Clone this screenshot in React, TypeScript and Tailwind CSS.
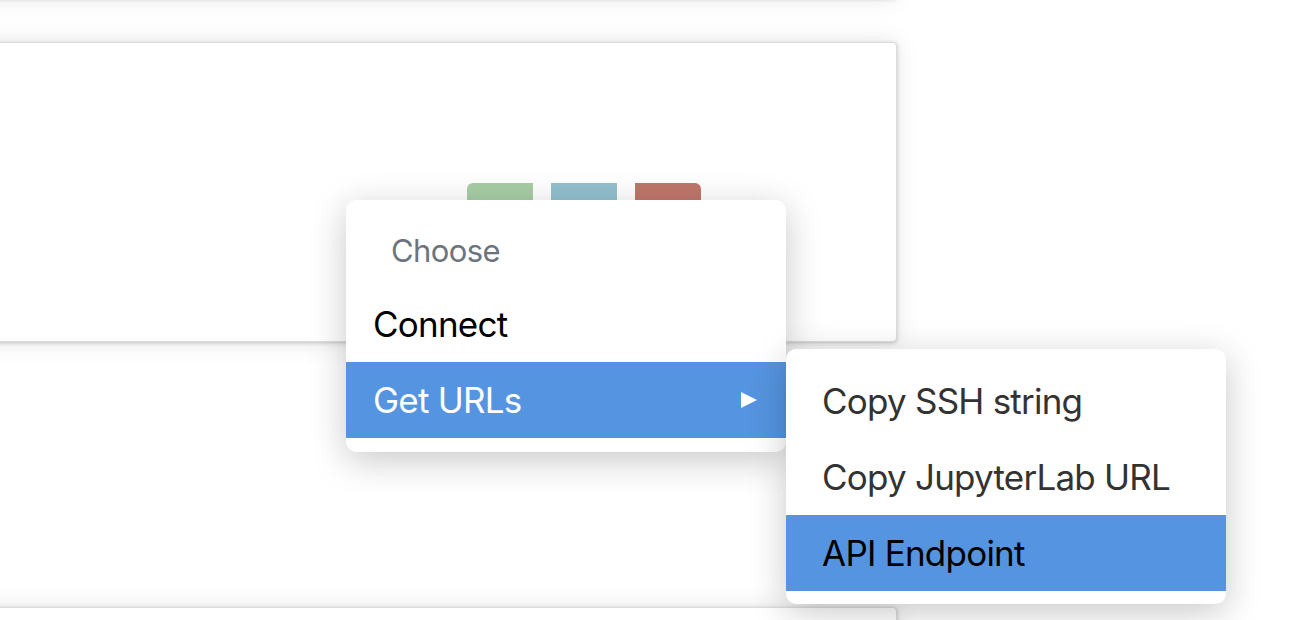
import type { ReactNode } from "react";

type MenuItemProps = {
  label: string;
  active?: boolean;
  submenu?: boolean;
  textClass?: string;
  padClass?: string;
};

function MenuItem({ label, active, submenu, textClass, padClass }: MenuItemProps) {
  return (
    <div
      className={`flex h-[76px] items-center justify-between ${padClass ?? "pl-[27px] pr-[29px]"} ${
        active ? "bg-[#5594e0]" : ""
      }`}
    >
      <span className={`text-[35px] leading-none tracking-[-0.022em] ${textClass ?? "text-black"}`}>
        {label}
      </span>
      {submenu && (
        <svg width="16" height="16" viewBox="0 0 16 16">
          <polygon points="0,0 16,8 0,16" fill="#fff" />
        </svg>
      )}
    </div>
  );
}

function Menu({ className, children }: { className: string; children: ReactNode }) {
  return (
    <div
      className={`absolute w-[440px] overflow-hidden rounded-[10px] bg-white shadow-[0_8px_36px_rgba(0,0,0,0.22)] ${className}`}
    >
      {children}
    </div>
  );
}

export default function App() {
  return (
    <div className="relative h-[620px] w-[1314px] overflow-hidden bg-white font-['Inter','Noto_Sans',sans-serif]">
      <div className="-mt-[200px] ml-[-40px] h-[198px] w-[937px] rounded-[4px] border border-[#dcdcdc] bg-white shadow-[0_1px_4px_rgba(0,0,0,0.2),0_0_24px_rgba(0,0,0,0.1)]" />

      <div className="ml-[-40px] mt-[44px] h-[300px] w-[937px] rounded-[4px] border border-[#dcdcdc] bg-white shadow-[0_1px_4px_rgba(0,0,0,0.2),0_0_24px_rgba(0,0,0,0.1)]">
        <div className="flex justify-end gap-[18px] pr-[195px] pt-[140px]">
          <div className="h-[40px] w-[66px] rounded-l-[6px] bg-[#a8cea5]" />
          <div className="h-[40px] w-[66px] bg-[#93c0cf]" />
          <div className="h-[40px] w-[66px] rounded-r-[6px] bg-[#c0776b]" />
        </div>
      </div>

      <div className="ml-[-40px] mt-[265px] h-[300px] w-[937px] rounded-[4px] border border-[#dcdcdc] bg-white shadow-[0_1px_4px_rgba(0,0,0,0.2),0_0_24px_rgba(0,0,0,0.1)]" />

      <Menu className="left-[346px] top-[200px] pb-[14px] pt-[10px]">
        <div className="flex h-[76px] items-center pl-[45px] pt-[4px]">
          <span className="text-[31px] leading-none tracking-[-0.02em] text-[#6c757d]">Choose</span>
        </div>
        <MenuItem label="Connect" />
        <MenuItem label="Get URLs" active submenu textClass="text-white" />
      </Menu>

      <Menu className="left-[786px] top-[349px] pb-[13px] pt-[14px]">
        <MenuItem label="Copy SSH string" textClass="text-[#333333]" padClass="pl-[36px] pr-[29px]" />
        <MenuItem label="Copy JupyterLab URL" textClass="text-[#333333]" padClass="pl-[36px] pr-[29px]" />
        <MenuItem label="API Endpoint" active textClass="text-black" padClass="pl-[36px] pr-[29px]" />
      </Menu>
    </div>
  );
}
